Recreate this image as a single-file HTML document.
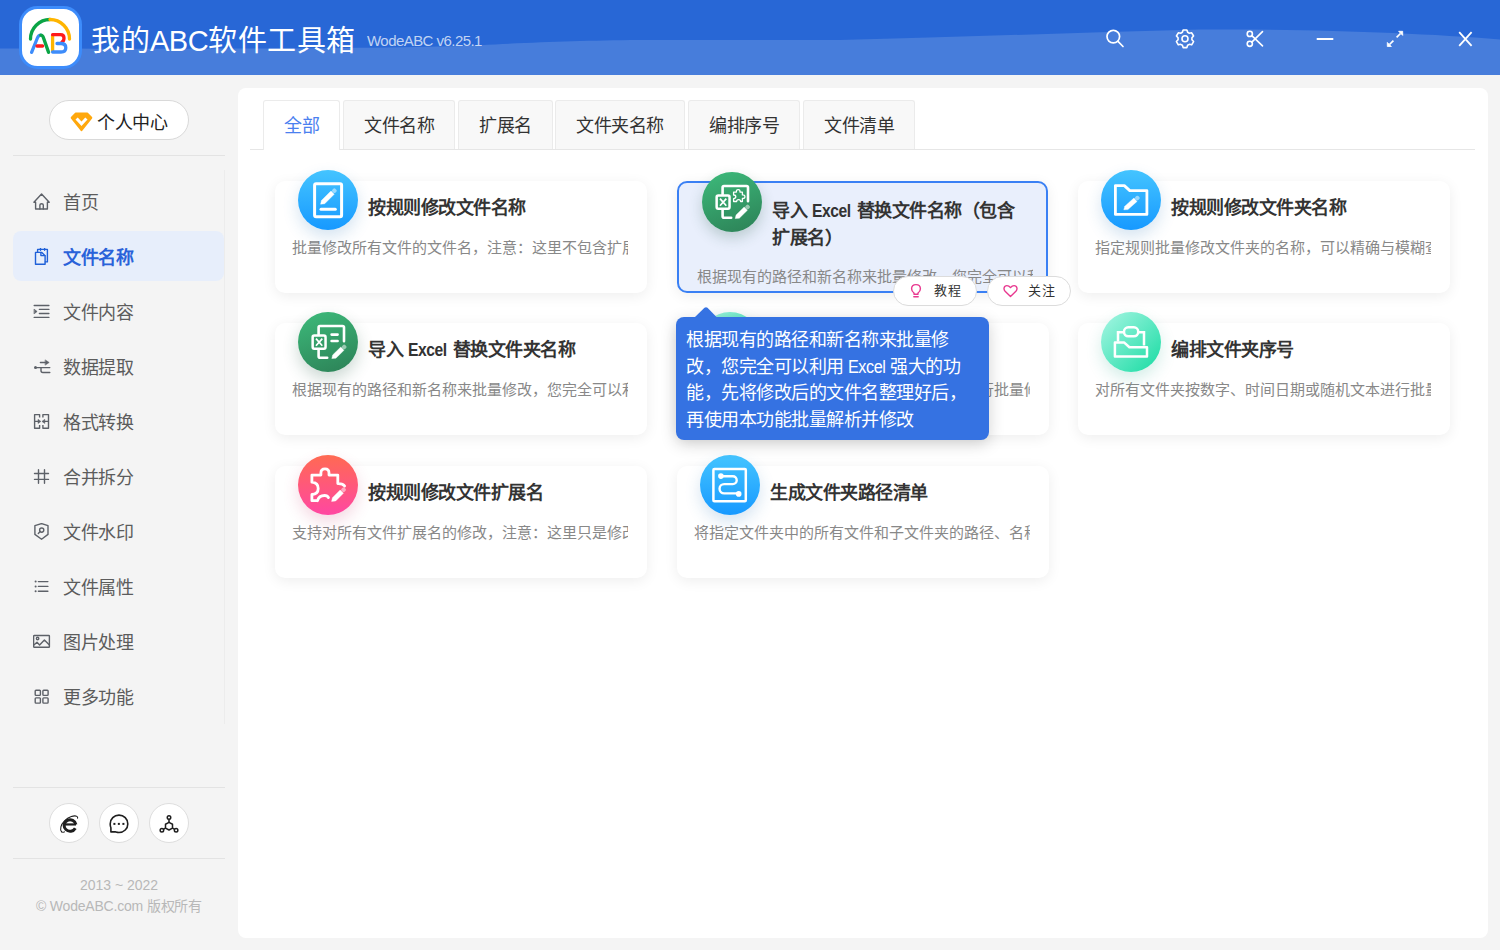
<!DOCTYPE html>
<html lang="zh-CN">
<head>
<meta charset="utf-8">
<style>
*{margin:0;padding:0;box-sizing:border-box}
html,body{width:1500px;height:950px;overflow:hidden;background:#f4f4f4;font-family:"Liberation Sans",sans-serif;position:relative}
.abs{position:absolute}
#hdr{left:0;top:0;width:1500px;height:75px;background:#2867d6;overflow:hidden}
#hdr svg.wave{position:absolute;left:0;top:0}
.title{left:91px;top:21px;font-size:29px;letter-spacing:0.5px;color:#fff;white-space:nowrap;line-height:40px}
.title span{letter-spacing:-0.5px}
.ver{left:367px;top:31px;font-size:15px;letter-spacing:-0.55px;color:rgba(255,255,255,.72);white-space:nowrap;line-height:20px}
.nav{left:13px;width:211px;height:50px;border-radius:8px}
.nav .ic{position:absolute;left:20px;top:17px}
.nav .tx{position:absolute;left:50px;top:2px;line-height:50px;font-size:18px;letter-spacing:-0.5px;color:#5c5c5c;white-space:nowrap}
.nav.on{background:#e7eefb}
.nav.on .tx{color:#2a62d9;font-weight:bold}
#main{left:238px;top:88px;width:1250px;height:850px;background:#fff;border-radius:8px}
.tab{top:100px;height:49px;background:#f8f8f8;border:1px solid #ebebeb;border-bottom:none;border-radius:3px 3px 0 0;font-size:18px;letter-spacing:-0.5px;color:#333;line-height:51px;text-align:center;white-space:nowrap}
.tab.on{background:#fff;color:#4a80ef;height:50px}
.card{width:372px;height:112px;background:#fff;border-radius:10px;box-shadow:0 3px 14px rgba(0,0,0,.07)}
.card .ct{position:absolute;left:93px;top:13px;font-size:18px;letter-spacing:-0.5px;font-weight:bold;color:#333;white-space:nowrap;line-height:28px}
.en{display:inline-block;transform:scaleX(.87);transform-origin:0 50%;margin-right:-4px}
.en2{display:inline-block;transform:scaleX(.9);transform-origin:0 50%;margin-right:-4px}
.card .cd{position:absolute;left:17px;top:55px;width:336px;overflow:hidden;font-size:15px;color:#888;white-space:nowrap;line-height:24px}
.circ{width:60px;height:60px;border-radius:50%}
.pill{height:29px;background:#fff;border:1px solid #dcdcdc;border-radius:15px}
.card.hov{background:#e9effc;border:2px solid #3a80f4;width:371px}
.cb{width:40px;height:40px;border-radius:50%;background:#fff;border:1px solid #dedede}
</style>
</head>
<body>
<div id="hdr" class="abs">
  <svg class="wave" width="1500" height="75" viewBox="0 0 1500 75">
    <path d="M0 48.5 C 250 49, 400 48.5, 480 45.2 C 540 42, 580 40.6, 640 40 L 840 40 C 960 37, 1080 32.5, 1200 29.6 C 1310 28.8, 1420 33, 1500 39.4 L1500 75 L0 75 Z" fill="#477ddb"/>
  </svg>
</div>

<!-- logo -->
<svg class="abs" style="left:19px;top:6px" width="63" height="63" viewBox="0 0 63 63">
  <rect x="1.5" y="1.5" width="60" height="60" rx="17" fill="#fff" stroke="#3d8cfb" stroke-width="3"/>
  <path d="M11.5 33 A19.5 19.5 0 0 1 31 13.5" fill="none" stroke="#0aa445" stroke-width="3.3" stroke-linecap="round"/>
  <path d="M31 13.5 A19.5 19.5 0 0 1 50.5 33" fill="none" stroke="#ffb500" stroke-width="3.3" stroke-linecap="round"/>
  <path d="M12.6 46.4 L18.4 32 C19.2 29.9, 20.3 29.2, 21.8 29.2" fill="none" stroke="#3d8cfb" stroke-width="3.3" stroke-linecap="round"/>
  <path d="M21.8 29.2 C23 29.2, 23.8 29.9, 24.4 31.6 L29.6 46.4" fill="none" stroke="#0aa445" stroke-width="3.3" stroke-linecap="round"/>
  <path d="M18 40 L23.6 40" fill="none" stroke="#ff1a1a" stroke-width="3.3" stroke-linecap="round"/>
  <path d="M33.6 29 L33.6 46" fill="none" stroke="#ffb500" stroke-width="3.3"/>
  <path d="M33.6 28.7 L41.5 28.7 Q45 28.7 45 32 Q45 35 43 36" fill="none" stroke="#ff1a1a" stroke-width="3.3" stroke-linecap="round"/>
  <path d="M38 37.5 L42 37.5 Q46.8 37.5 46.8 41.7 Q46.8 46 42 46 L33.6 46" fill="none" stroke="#3d8cfb" stroke-width="3.3" stroke-linecap="round"/>
</svg>
<div class="abs title">我的<span>ABC</span>软件工具箱</div>
<div class="abs ver">WodeABC v6.25.1</div>

<div id="main" class="abs"></div>

<!-- header icons -->
<svg class="abs" style="left:1100px;top:24px" width="30" height="30" viewBox="0 0 30 30" fill="none" stroke="#fff" stroke-width="1.7" stroke-linecap="round">
  <circle cx="13.3" cy="12.6" r="6.3"/><path d="M18 17.4 L23 22.5"/>
</svg>
<svg class="abs" style="left:1170px;top:24px" width="30" height="30" viewBox="0 0 30 30" fill="none" stroke="#fff" stroke-width="1.6" stroke-linejoin="round">
  <path d="M12.38 8.31 L13.13 6.00 L16.87 6.00 L17.62 8.31 L19.31 9.28 L21.69 8.78 L23.56 12.02 L21.93 13.83 L21.93 15.77 L23.56 17.58 L21.69 20.82 L19.31 20.32 L17.62 21.29 L16.87 23.60 L13.13 23.60 L12.38 21.29 L10.69 20.32 L8.31 20.82 L6.44 17.58 L8.07 15.77 L8.07 13.83 L6.44 12.02 L8.31 8.78 L10.69 9.28 Z"/>
  <circle cx="15" cy="14.7" r="3"/>
</svg>
<svg class="abs" style="left:1240px;top:24px" width="30" height="30" viewBox="0 0 30 30" fill="none" stroke="#fff" stroke-width="1.6" stroke-linecap="round">
  <circle cx="9.8" cy="9.9" r="2.6"/><circle cx="9.8" cy="19.8" r="2.6"/>
  <path d="M11.8 18.1 L22.5 7.6"/><path d="M11.8 11.6 L22.5 21.9"/>
</svg>
<svg class="abs" style="left:1310px;top:24px" width="30" height="30" viewBox="0 0 30 30" fill="none" stroke="#fff" stroke-width="2">
  <path d="M6.7 15 L23.3 15"/>
</svg>
<svg class="abs" style="left:1380px;top:24px" width="30" height="30" viewBox="0 0 30 30" fill="#fff" stroke="#fff" stroke-width="1.7">
  <path d="M13.4 16.6 L9.5 20.5" fill="none"/><path d="M16.6 13.4 L20.5 9.5" fill="none"/>
  <path d="M7.3 22.5 L7.3 18.4 L11.4 22.5 Z" stroke-width="0.8"/>
  <path d="M22.7 7.3 L22.7 11.4 L18.6 7.3 Z" stroke-width="0.8"/>
</svg>
<svg class="abs" style="left:1450px;top:24px" width="30" height="30" viewBox="0 0 30 30" fill="none" stroke="#fff" stroke-width="1.8">
  <path d="M9.2 8.2 L21.6 21.8 M21.6 8.2 L9.2 21.8"/>
</svg>


<!-- tabs -->
<div class="abs" style="left:250px;top:149px;width:1225px;height:1px;background:#e6e6e6"></div>
<div class="abs tab on" style="left:263px;width:77px">全部</div>
<div class="abs tab" style="left:343px;width:112px">文件名称</div>
<div class="abs tab" style="left:458px;width:95px">扩展名</div>
<div class="abs tab" style="left:555px;width:130px">文件夹名称</div>
<div class="abs tab" style="left:688px;width:112px">编排序号</div>
<div class="abs tab" style="left:803px;width:112px">文件清单</div>
<!--CARDS-->
<div class="abs card" style="left:275px;top:181px"><div class="ct">按规则修改文件名称</div><div class="cd">批量修改所有文件的文件名，注意：这里不包含扩展名</div></div>
<div class="abs circ" style="left:297.5px;top:170px;background:linear-gradient(180deg,#44c4ff,#1799ff);box-shadow:0 7px 16px rgba(45,120,185,.2)"><svg width="60" height="60" viewBox="0 0 60 60"><rect x="16.6" y="13.8" width="27" height="33" rx="1.5" fill="none" stroke="#fff" stroke-width="3"/>
   <path d="M23 39.3 L37.3 39.3" stroke="#fff" stroke-width="3" stroke-linecap="round"/><path d="M22.59 34.19 L26.69 33.76 L36.22 24.23 L32.97 20.98 L23.44 30.51 Z" fill="#fff" stroke="#fff" stroke-width="0.4" stroke-linejoin="round"/><rect x="34.26" y="18.74" width="4.2" height="4.2" rx="1.4" transform="rotate(45 36.36 20.84)" fill="rgba(255,255,255,.5)"/></svg></div>
<div class="abs card" style="left:1078px;top:181px"><div class="ct">按规则修改文件夹名称</div><div class="cd">指定规则批量修改文件夹的名称，可以精确与模糊查找</div></div>
<div class="abs circ" style="left:1100.5px;top:170px;background:linear-gradient(180deg,#44c4ff,#1799ff);box-shadow:0 7px 16px rgba(45,120,185,.2)"><svg width="60" height="60" viewBox="0 0 60 60"><path d="M14.4 15.6 L23.3 15.6 L28.8 20.6 L45.9 20.6 L45.9 44.4 L14.4 44.4 Z" fill="none" stroke="#fff" stroke-width="2.8" stroke-linejoin="round"/>
   <path d="M22.80 39.78 L26.92 39.58 L36.00 31.48 L32.93 28.05 L23.86 36.15 Z" fill="#fff" stroke="#fff" stroke-width="0.4" stroke-linejoin="round"/><rect x="34.23" y="26.00" width="4.2" height="4.2" rx="1.4" transform="rotate(45 36.33 28.10)" fill="rgba(255,255,255,.5)"/></svg></div>
<div class="abs card" style="left:275px;top:323px"><div class="ct">导入 <span class="en">Excel</span> 替换文件夹名称</div><div class="cd">根据现有的路径和新名称来批量修改，您完全可以利用</div></div>
<div class="abs circ" style="left:297.5px;top:312px;background:linear-gradient(160deg,#3dbb7b,#2c8056);box-shadow:0 7px 16px rgba(40,90,70,.24)"><svg width="60" height="60" viewBox="0 0 60 60"><path d="M20.6 22.3 L20.6 15.5 Q20.6 14 22 14 L44.5 14 Q46 14 46 15.5 L46 29.2" fill="none" stroke="#fff" stroke-width="2.6" stroke-linecap="round"/>
   <path d="M20.6 37.9 L20.6 44.3 Q20.6 45.8 22 45.8 L29.2 45.8" fill="none" stroke="#fff" stroke-width="2.6" stroke-linecap="round"/>
   <rect x="14.65" y="23.55" width="12.9" height="13.1" rx="1.6" fill="none" stroke="#fff" stroke-width="2.5"/>
   <path d="M18 26.6 L24.3 33.8 M24.3 26.6 L18 33.8" stroke="#fff" stroke-width="1.7"/>
   <path d="M33.6 22.6 L39.6 22.6 M33.6 29 L39.6 29" stroke="#fff" stroke-width="2.6" stroke-linecap="round"/>
   <path d="M33.79 46.59 L37.90 46.21 L45.97 38.32 L42.76 35.03 L34.68 42.92 Z" fill="#fff" stroke="#fff" stroke-width="0.4" stroke-linejoin="round"/><rect x="44.06" y="32.83" width="4.2" height="4.2" rx="1.4" transform="rotate(45 46.16 34.93)" fill="rgba(255,255,255,.5)"/></svg></div>
<div class="abs card" style="left:677px;top:323px"><div class="ct">编排文件序号</div><div class="cd">对所有文件按数字、时间日期或随机文本进行批量修改</div></div>
<div class="abs circ" style="left:699.5px;top:312px;background:linear-gradient(135deg,#a8f6e4,#17dba2);box-shadow:0 7px 16px rgba(40,170,140,.2)"><svg width="60" height="60" viewBox="0 0 60 60"><rect x="23" y="15.3" width="14.2" height="9" rx="4.3" fill="none" stroke="#fff" stroke-width="2.5"/>
   <path d="M23.1 20.3 L17 20.3 L17 29.6 M37.1 20.3 L43 20.3 L43 33.4" fill="none" stroke="#fff" stroke-width="2.5"/>
   <path d="M13.9 30.6 L23.3 30.6 L28.4 35.2 L46 35.2 L46 44.6 L13.9 44.6 Z" fill="none" stroke="#fff" stroke-width="2.5" stroke-linejoin="round"/></svg></div>
<div class="abs card" style="left:1078px;top:323px"><div class="ct">编排文件夹序号</div><div class="cd">对所有文件夹按数字、时间日期或随机文本进行批量修改</div></div>
<div class="abs circ" style="left:1100.5px;top:312px;background:linear-gradient(135deg,#a8f6e4,#17dba2);box-shadow:0 7px 16px rgba(40,170,140,.2)"><svg width="60" height="60" viewBox="0 0 60 60"><rect x="23" y="15.3" width="14.2" height="9" rx="4.3" fill="none" stroke="#fff" stroke-width="2.5"/>
   <path d="M23.1 20.3 L17 20.3 L17 29.6 M37.1 20.3 L43 20.3 L43 33.4" fill="none" stroke="#fff" stroke-width="2.5"/>
   <path d="M13.9 30.6 L23.3 30.6 L28.4 35.2 L46 35.2 L46 44.6 L13.9 44.6 Z" fill="none" stroke="#fff" stroke-width="2.5" stroke-linejoin="round"/></svg></div>
<div class="abs card" style="left:275px;top:466px"><div class="ct">按规则修改文件扩展名</div><div class="cd">支持对所有文件扩展名的修改，注意：这里只是修改扩展名</div></div>
<div class="abs circ" style="left:297.5px;top:455px;background:linear-gradient(180deg,#ff6a52,#ff47a2);box-shadow:0 7px 16px rgba(200,60,110,.2)"><svg width="60" height="60" viewBox="0 0 60 60"><path d="M19.5 45.7 L13.9 45.7 L13.9 39.5 Q20.2 39 20.2 33.4 Q20.2 27.8 13.9 27.2 L13.9 20.1 L22.9 20.1 L22.9 18 Q22.9 13.9 27 13.9 Q31 13.9 31 18 L31 20.1 L39.8 20.1 L39.8 28.6 Q45 28.4 46.6 31 M19.5 45.7 Q21 40.5 26.5 40.5 Q29.5 40.5 30.5 42.6" fill="none" stroke="#fff" stroke-width="2.8" stroke-linejoin="round" stroke-linecap="round"/>
   <path d="M33.59 46.39 L37.69 45.96 L45.42 38.23 L42.17 34.98 L34.44 42.71 Z" fill="#fff" stroke="#fff" stroke-width="0.4" stroke-linejoin="round"/><rect x="43.46" y="32.74" width="4.2" height="4.2" rx="1.4" transform="rotate(45 45.56 34.84)" fill="rgba(255,255,255,.5)"/></svg></div>
<div class="abs card" style="left:677px;top:466px"><div class="ct">生成文件夹路径清单</div><div class="cd">将指定文件夹中的所有文件和子文件夹的路径、名称导出</div></div>
<div class="abs circ" style="left:699.5px;top:455px;background:linear-gradient(180deg,#44c4ff,#1799ff);box-shadow:0 7px 16px rgba(45,120,185,.2)"><svg width="60" height="60" viewBox="0 0 60 60"><rect x="13.4" y="13.9" width="32.4" height="32.3" rx="1" fill="none" stroke="#fff" stroke-width="2.5"/>
   <circle cx="20.9" cy="21.1" r="2.8" fill="#fff"/><circle cx="38.7" cy="38.9" r="2.8" fill="#fff"/>
   <path d="M20.9 21.3 L32.8 21.3 A3.9 3.9 0 0 1 32.8 29.1 L24.2 29.1 A4.65 4.65 0 0 0 24.2 38.4 L38.7 38.4" fill="none" stroke="#fff" stroke-width="2.4"/></svg></div>
<div class="abs card hov" style="left:677px;top:181px"><div class="ct" style="left:93px;top:15px;line-height:26.6px;white-space:normal;width:260px">导入 <span class="en">Excel</span> 替换文件名称（包含<br>扩展名）</div><div class="cd" style="top:82px;left:17.5px">根据现有的路径和新名称来批量修改，您完全可以利用</div></div>
<div class="abs circ" style="left:701.5px;top:171.5px;background:linear-gradient(160deg,#3dbb7b,#2c8056);box-shadow:0 6px 14px rgba(40,90,70,.24)"><svg width="60" height="60" viewBox="0 0 60 60"><path d="M20.6 22.3 L20.6 15.5 Q20.6 14 22 14 L44.5 14 Q46 14 46 15.5 L46 29.2" fill="none" stroke="#fff" stroke-width="2.6" stroke-linecap="round"/>
   <path d="M20.6 37.9 L20.6 44.3 Q20.6 45.8 22 45.8 L29.2 45.8" fill="none" stroke="#fff" stroke-width="2.6" stroke-linecap="round"/>
   <rect x="14.65" y="23.55" width="12.9" height="13.1" rx="1.6" fill="none" stroke="#fff" stroke-width="2.5"/>
   <path d="M18 26.6 L24.3 33.8 M24.3 26.6 L18 33.8" stroke="#fff" stroke-width="1.7"/>
   <path d="M31.6 20.1 L34.4 20.1 Q34.2 17.6 36.2 17.6 Q38.2 17.6 38 20.1 L40.4 20.1 L40.4 22.9 Q42.9 22.7 42.9 24.7 Q42.9 26.7 40.4 26.5 L40.4 29.5 L38.6 29.5 Q38.6 27.6 36.6 27.6 Q34.6 27.6 34.6 29.5 L31.6 29.5 L31.6 26.6 Q33.8 26.6 33.8 24.8 Q33.8 23 31.6 23 Z" fill="none" stroke="#fff" stroke-width="1.3" stroke-linejoin="round"/>
   <path d="M33.19 46.59 L37.30 46.21 L45.37 38.32 L42.16 35.03 L34.08 42.92 Z" fill="#fff" stroke="#fff" stroke-width="0.4" stroke-linejoin="round"/><rect x="43.46" y="32.83" width="4.2" height="4.2" rx="1.4" transform="rotate(45 45.56 34.93)" fill="rgba(255,255,255,.5)"/></svg></div>
<!--ENDCARDS-->
<!-- pills -->
<div class="abs pill" style="left:893px;top:276px;width:84px;height:30px"></div>
<svg class="abs" style="left:909px;top:283px" width="14" height="16" viewBox="0 0 14 16" fill="none" stroke="#e8388f" stroke-width="1.4">
  <path d="M5 11.3 L5 10 Q2.6 8.3 2.6 5.7 Q2.6 1.6 7 1.6 Q11.4 1.6 11.4 5.7 Q11.4 8.3 9 10 L9 11.3 Z" stroke-linejoin="round"/>
  <path d="M4.8 13.8 L9.2 13.8" stroke-linecap="round"/>
</svg>
<div class="abs" style="left:934px;top:280px;font-size:13px;letter-spacing:1px;color:#333;line-height:22px;white-space:nowrap">教程</div>
<div class="abs pill" style="left:987px;top:276px;width:84px;height:30px"></div>
<svg class="abs" style="left:1002px;top:283px" width="17" height="16" viewBox="0 0 17 16" fill="none" stroke="#e8388f" stroke-width="1.4" stroke-linejoin="round">
  <path d="M8.5 13.4 L3.1 8.3 Q1.7 6.8 2.1 4.9 Q2.6 2.6 4.9 2.6 Q6.9 2.6 8.5 4.6 Q10.1 2.6 12.1 2.6 Q14.4 2.6 14.9 4.9 Q15.3 6.8 13.9 8.3 Z"/>
</svg>
<div class="abs" style="left:1028px;top:280px;font-size:13px;letter-spacing:1px;color:#333;line-height:22px;white-space:nowrap">关注</div>
<!-- tooltip -->
<div class="abs" style="left:676px;top:317px;width:313px;height:123px;background:#3572e2;border-radius:8px;box-shadow:0 4px 16px rgba(0,0,0,.18)"></div>
<svg class="abs" style="left:694px;top:306px" width="24" height="12" viewBox="0 0 24 12"><path d="M0.5 11.5 L10.5 1.8 Q12 0.6 13.5 1.8 L23 11.5 Z" fill="#3572e2"/></svg>
<div class="abs" style="left:686px;top:327px;font-size:18px;letter-spacing:-0.5px;line-height:26.7px;color:#fff;white-space:nowrap">根据现有的路径和新名称来批量修<br>改，您完全可以利用 <span class="en2">Excel</span> 强大的功<br>能，先将修改后的文件名整理好后，<br>再使用本功能批量解析并修改</div>

<!-- sidebar -->
<div class="abs" style="left:224px;top:170px;width:1px;height:554px;background:#ececec"></div>
<div class="abs pill" style="left:49px;top:100px;width:140px;height:40px;border-radius:20px;border-color:#d9d9d9"></div>
<svg class="abs" style="left:70px;top:112px" width="23" height="20" viewBox="0 0 23 20">
  <path d="M5.6 1.6 L17.4 1.6 L21.3 5.8 L11.5 18.2 L1.7 5.8 Z" fill="#ffa80d" stroke="#ffa80d" stroke-width="2" stroke-linejoin="round"/>
  <path d="M6.6 6.4 L11.5 11.8 L16.4 6.4" fill="none" stroke="#fff" stroke-width="3" stroke-linejoin="miter"/>
</svg>
<div class="abs" style="left:97px;top:110px;font-size:18px;letter-spacing:-0.5px;color:#222;line-height:26px;white-space:nowrap">个人中心</div>
<div class="abs" style="left:13px;top:155px;width:212px;height:1px;background:#e3e3e3"></div>

<!--NAV-->
<div class="abs nav" style="top:176px"><svg class="ic" width="18" height="18" viewBox="0 0 18 18" fill="none" stroke="#5d6168" stroke-width="1.4" stroke-linejoin="round" stroke-linecap="round"><path d="M2.6 16 L2.6 9.3 L0.9 9.3 L8.56 1.1 L16.2 9.3 L14.4 9.3 L14.4 16 Z"/><path d="M6.9 16 L6.9 12 Q6.9 10.7 8.6 10.7 Q10.3 10.7 10.3 12 L10.3 16"/></svg><div class="tx">首页</div></div>
<div class="abs nav on" style="top:231px"><svg class="ic" width="18" height="18" viewBox="0 0 18 18" fill="none" stroke="#1f60d8" stroke-width="1.4" stroke-linejoin="round" stroke-linecap="round"><path d="M2.5 4.4 L8.8 4.4 L12.1 7.7 L12.1 16.2 L2.5 16.2 Z"/><path d="M7.9 4.6 L7.9 7.6 L11.9 7.6"/><path d="M4.6 4.2 L4.6 1.4 L14.4 1.4 L14.4 13.9 L12.3 13.9"/><path d="M7.5 0.4 L7.5 2.2 M11.6 0.4 L11.6 2.2"/></svg><div class="tx">文件名称</div></div>
<div class="abs nav" style="top:286px"><svg class="ic" width="18" height="18" viewBox="0 0 18 18" fill="none" stroke="#5d6168" stroke-width="1.4" stroke-linecap="round"><path d="M1.2 2.5 L15.9 2.5 M6.4 6.4 L15.9 6.4 M6.4 10.5 L15.9 10.5 M1.2 14.4 L15.9 14.4"/><path d="M1.3 6.3 L4.1 8.5 L1.3 10.7 Z" fill="#5d6168" stroke-width="0.6" stroke-linejoin="round"/></svg><div class="tx">文件内容</div></div>
<div class="abs nav" style="top:341px"><svg class="ic" width="18" height="18" viewBox="0 0 18 18" fill="none" stroke="#5d6168" stroke-width="1.4" stroke-linecap="round"><circle cx="2.5" cy="9.6" r="1.5" fill="#5d6168" stroke="none"/><path d="M2.5 9.6 L16.8 9.6 M8 9.8 L8 12.6 Q8 14.5 9.8 14.5 L16.8 14.5 M7.4 4.5 L13.5 4.5"/><path d="M12.4 2 L16.2 4.5 L12.4 7 Z" fill="#5d6168" stroke-width="0.5" stroke-linejoin="round"/></svg><div class="tx">数据提取</div></div>
<div class="abs nav" style="top:396px"><svg class="ic" width="18" height="18" viewBox="0 0 18 18" fill="none" stroke="#5d6168" stroke-width="1.4" stroke-linejoin="round"><path d="M6.6 4.5 L6.6 1.6 L1.6 1.6 L1.6 15.3 L6.6 15.3 L6.6 12 M9.9 4.5 L9.9 1.6 L15.5 1.6 L15.5 15.3 L9.9 15.3 L9.9 12 M1.6 8.4 L5.5 8.4 M11 8.4 L15.5 8.4"/><path d="M5 6.3 L7.9 8.4 L5 10.5 Z M11.8 6.3 L8.9 8.4 L11.8 10.5 Z" fill="#5d6168" stroke-width="0.5"/></svg><div class="tx">格式转换</div></div>
<div class="abs nav" style="top:451px"><svg class="ic" width="18" height="18" viewBox="0 0 18 18" fill="none" stroke="#5d6168" stroke-width="1.4" stroke-linecap="round"><path d="M5.5 1.7 L5.5 15.2 M11.5 1.7 L11.5 15.2 M1.5 5.5 L15.5 5.5 M1.5 11.4 L15.5 11.4"/></svg><div class="tx">合并拆分</div></div>
<div class="abs nav" style="top:506px"><svg class="ic" width="18" height="18" viewBox="0 0 18 18" fill="none" stroke="#5d6168" stroke-width="1.4" stroke-linejoin="round" stroke-linecap="round"><path d="M1.9 2.6 L8.56 0.6 L15 2.6 L15 11.4 L8.56 16.2 L1.9 11.4 Z"/><circle cx="8.7" cy="7.1" r="2.1"/><path d="M7.2 8.6 L5.3 10.4"/></svg><div class="tx">文件水印</div></div>
<div class="abs nav" style="top:561px"><svg class="ic" width="18" height="18" viewBox="0 0 18 18" fill="none" stroke="#5d6168" stroke-width="1.4" stroke-linecap="round"><path d="M5.4 3.6 L14.9 3.6 M5.4 8.4 L14.9 8.4 M5.4 13.2 L14.9 13.2"/><path d="M2.6 3.6 L2.65 3.6 M2.6 8.4 L2.65 8.4 M2.6 13.2 L2.65 13.2" stroke-width="2"/></svg><div class="tx">文件属性</div></div>
<div class="abs nav" style="top:616px"><svg class="ic" width="18" height="18" viewBox="0 0 18 18" fill="none" stroke="#5d6168" stroke-width="1.4" stroke-linejoin="round"><rect x="0.6" y="2.5" width="15.8" height="11.8" rx="0.6"/><path d="M0.6 12.3 L4 9.3 L6.6 12 L11.4 7 L16.4 12.1"/><circle cx="4.6" cy="5.5" r="1.2"/></svg><div class="tx">图片处理</div></div>
<div class="abs nav" style="top:671px"><svg class="ic" width="18" height="18" viewBox="0 0 18 18" fill="none" stroke="#5d6168" stroke-width="1.4"><rect x="2.2" y="2.2" width="5.2" height="5.2" rx="0.8"/><rect x="9.9" y="2.2" width="5.2" height="5.2" rx="0.8"/><rect x="2.2" y="9.9" width="5.2" height="5.2" rx="0.8"/><rect x="9.9" y="9.9" width="5.2" height="5.2" rx="0.8"/></svg><div class="tx">更多功能</div></div>
<!--ENDNAV-->

<div class="abs" style="left:13px;top:787px;width:212px;height:1px;background:#e3e3e3"></div>
<div class="abs cb" style="left:49px;top:803px"></div>
<div class="abs cb" style="left:99px;top:803px"></div>
<div class="abs cb" style="left:149px;top:803px"></div>
<svg class="abs" style="left:59px;top:813px" width="20" height="20" viewBox="0 0 20 20">
  <path d="M5.4 11.45 L17 11.45" stroke="#1e1e1e" stroke-width="2.2" fill="none"/>
  <path d="M16.9 11.6 A5.9 5.7 0 1 0 16.3 15.2" stroke="#1e1e1e" stroke-width="3" fill="none"/>
  <path d="M2.6 18.9 C0.6 16.5 1.8 11.5 5.5 7.8 C9.5 3.8 15.5 2 17.8 3.4 C18.6 3.9 18.8 4.6 18.6 5.2" stroke="#1e1e1e" stroke-width="1.1" fill="none" stroke-linecap="round"/>
  <path d="M2.6 18.9 C3.4 19.6 4.6 19.4 5.6 18.9" stroke="#1e1e1e" stroke-width="1" fill="none" stroke-linecap="round"/>
</svg>
<svg class="abs" style="left:109px;top:813px" width="20" height="22" viewBox="0 0 20 22" fill="none" stroke="#1e1e1e" stroke-width="1.6" stroke-linejoin="round">
  <path d="M1.9 14.8 C1.4 13.6 1.2 12.3 1.2 10.9 C1.2 6 5.1 2.1 10 2.1 C14.9 2.1 18.8 6 18.8 10.9 C18.8 15.8 14.9 19.5 10 19.5 C8.6 19.5 7.6 19.2 6.4 18.9 L1.9 18.9 Z"/>
  <rect x="4.4" y="9.9" width="2" height="2" fill="#1e1e1e" stroke="none"/><rect x="8.85" y="9.9" width="2" height="2" fill="#1e1e1e" stroke="none"/><rect x="13.4" y="9.9" width="2" height="2" fill="#1e1e1e" stroke="none"/>
</svg>
<svg class="abs" style="left:159px;top:813px" width="20" height="20" viewBox="0 0 20 20" fill="none" stroke="#1e1e1e" stroke-width="1.5" stroke-linejoin="round">
  <path d="M10 9.3 L13.5 11.25 L13.5 15.05 L10 17 L6.5 15.05 L6.5 11.25 Z"/>
  <path d="M10 9.3 L10 6.3 M6.5 15.05 L4.3 16.3 M13.5 15.05 L15.7 16.3"/>
  <circle cx="10" cy="4.5" r="1.75"/><circle cx="2.9" cy="17.3" r="1.75"/><circle cx="17.1" cy="17.3" r="1.75"/>
</svg>
<div class="abs" style="left:13px;top:858px;width:212px;height:1px;background:#e3e3e3"></div>
<div class="abs" style="left:0;top:875px;width:238px;text-align:center;font-size:14px;color:#b8b8b8;line-height:20px;white-space:nowrap">2013 ~ 2022</div>
<div class="abs" style="left:0;top:896px;width:238px;text-align:center;font-size:14px;letter-spacing:-0.2px;color:#b8b8b8;line-height:20px;white-space:nowrap">© WodeABC.com 版权所有</div>

</body>
</html>
